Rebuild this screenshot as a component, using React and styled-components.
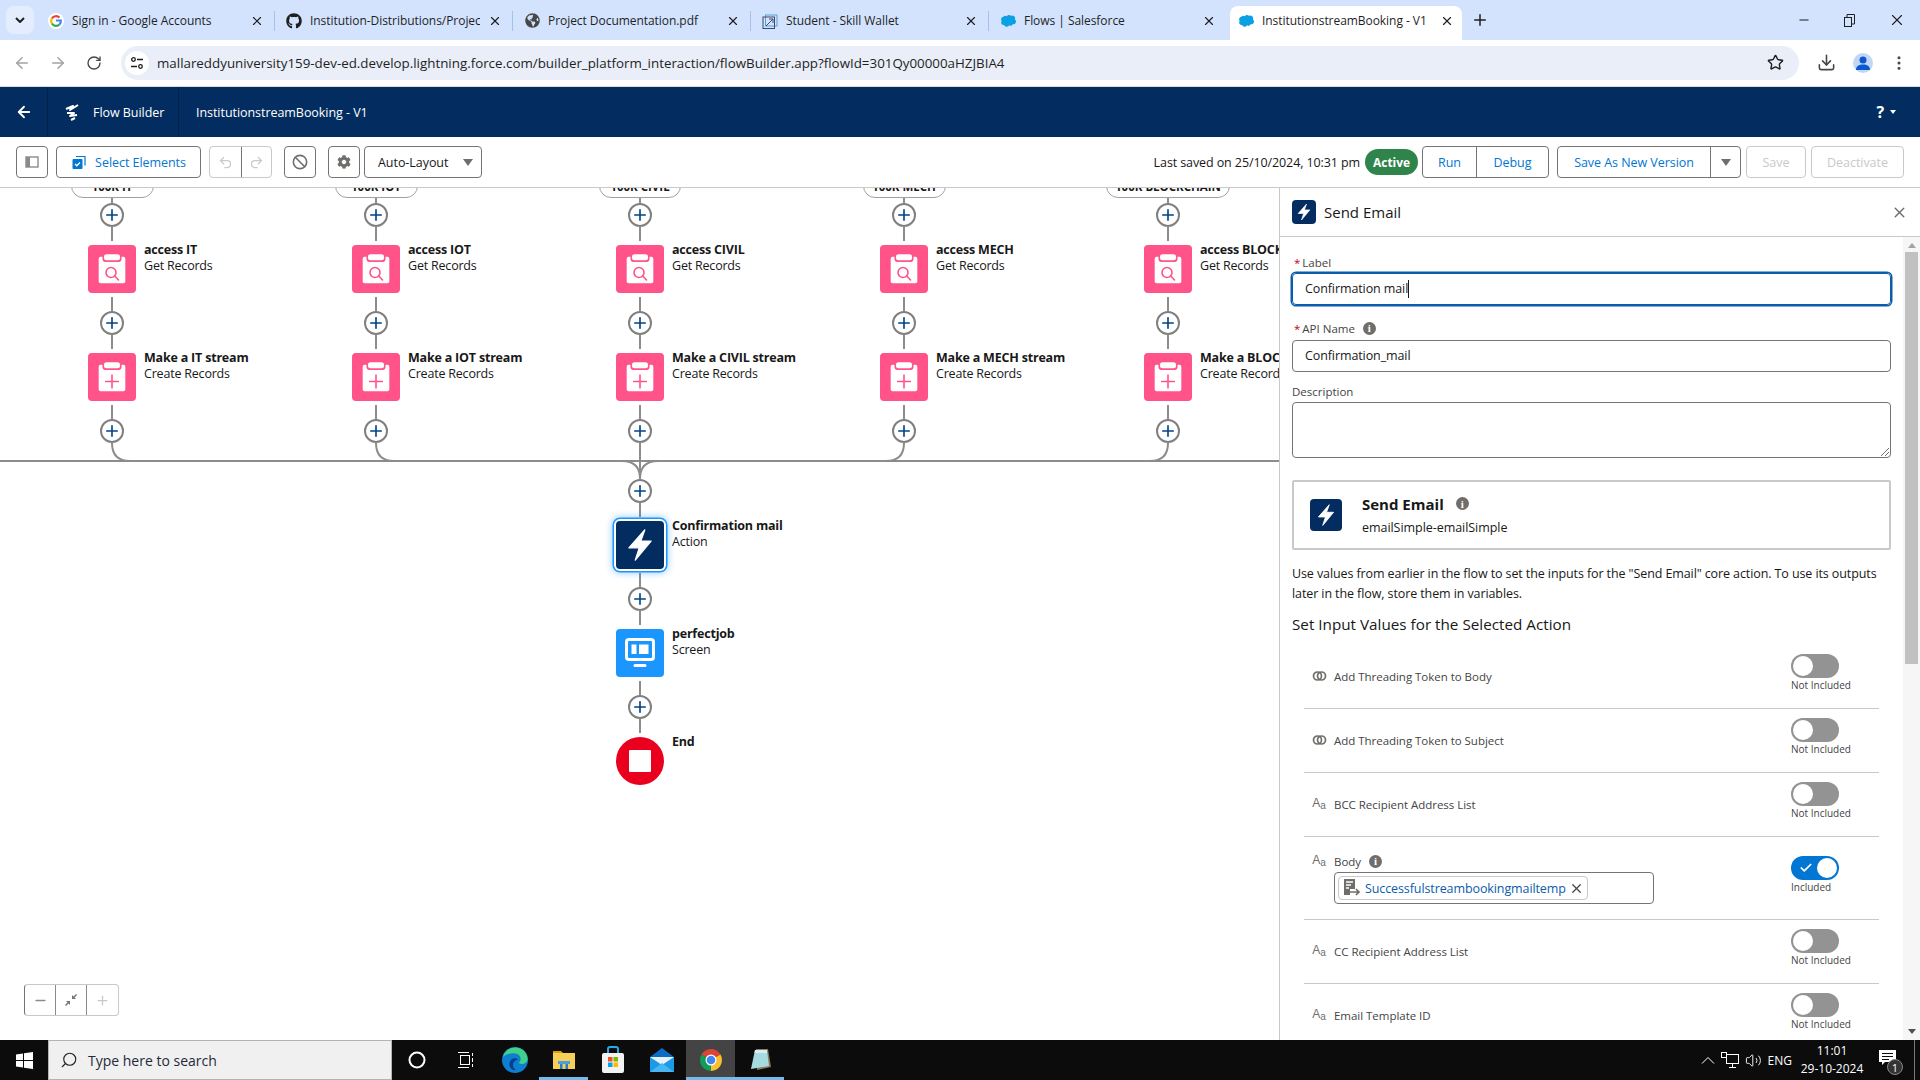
import React from 'react';
import styled, { createGlobalStyle } from 'styled-components';
import { ArrowLeft, ArrowRight, RotateCw, Star, Download, MoreVertical, X, Plus, Minus, Ban, Undo2, Redo2, Search, Check, Volume2 } from 'lucide-react';
import { FaGithub, FaCog, FaGlobeAmericas } from 'react-icons/fa';

const GlobalStyle = createGlobalStyle`
  html, body {
    margin: 0;
    width: 1920px;
    height: 1080px;
    overflow: hidden;
    background: white;
    font-family: "Open Sans", "Liberation Sans", sans-serif;
    color: #181818;
  }
  * { box-sizing: border-box; }
`;

//-----------Browser chrome-----------//

const Page = styled.div`
  display: flex;
  flex-direction: column;
  width: 1920px;
  height: 1080px;
`;
const TabStrip = styled.div`
  display: flex;
  align-items: flex-end;
  height: 40px;
  padding-left: 6px;
  background: #d3e3fd;
  flex-shrink: 0;
`;
const TabListButton = styled.div`
  display: flex;
  align-items: center;
  justify-content: center;
  width: 28px;
  height: 28px;
  margin: 0 6px 6px 0;
  border-radius: 8px;
  background: #e3edfe;
`;
const Tab = styled.div`
  position: relative;
  display: flex;
  align-items: center;
  width: 232px;
  height: 34px;
  margin-right: 6px;
  padding: 0 8px 5px;
  font-size: 12px;
  letter-spacing: -0.05px;
  color: #1f1f1f;
  border-radius: 8px 8px 0 0;
  background: ${(p) => (p.$active ? 'white' : 'transparent')};
  &::after {
    content: '';
    position: absolute;
    right: -3px;
    top: 5px;
    width: 1px;
    height: 20px;
    background: ${(p) => (p.$sep ? '#a8c0e8' : 'transparent')};
  }
`;
const TabIcon = styled.div`
  display: flex;
  align-items: center;
  justify-content: center;
  width: 16px;
  height: 16px;
  margin-right: 8px;
  flex-shrink: 0;
`;
const TabTitle = styled.div`
  flex: 1;
  min-width: 0;
  margin-right: 8px;
  white-space: nowrap;
  overflow: hidden;
`;
const NewTab = styled.div`
  display: flex;
  margin: 0 0 11px 3px;
`;
const WindowControls = styled.div`
  display: flex;
  align-items: center;
  margin: 0 14px 11px auto;
  gap: 33px;
`;
const NavBar = styled.div`
  display: flex;
  align-items: center;
  height: 47px;
  padding: 0 0 1px 13px;
  background: white;
  border-bottom: 1px solid #dadce0;
  flex-shrink: 0;
`;
const NavIcon = styled.div`
  display: flex;
  align-items: center;
  justify-content: center;
  width: 18px;
  margin-right: 18px;
  color: ${(p) => p.$color || '#474747'};
`;
const AddressBar = styled.div`
  display: flex;
  align-items: center;
  width: 1678px;
  height: 34px;
  padding: 0 15px 0 4px;
  border-radius: 17px;
  background: #e9eef8;
  font-size: 13.35px;
  color: #1f1f1f;
`;
const SiteInfo = styled.div`
  display: flex;
  align-items: center;
  justify-content: center;
  width: 24px;
  height: 24px;
  margin-right: 8px;
  border-radius: 50%;
  background: white;
`;
const Url = styled.div`
  flex: 1;
  white-space: nowrap;
`;
const NavRight = styled.div`
  display: flex;
  align-items: center;
  margin-left: 18px;
  gap: 17px;
  color: #474747;
`;
const Avatar = styled.div`
  display: flex;
  align-items: center;
  justify-content: center;
  width: 20px;
  height: 20px;
  border-radius: 50%;
  background: #c2d7f5;
`;

//-----------Flow builder header and toolbar-----------//

const AppHeader = styled.div`
  display: flex;
  align-items: stretch;
  height: 50px;
  background: #032d60;
  color: white;
  font-size: 12.5px;
  letter-spacing: -0.05px;
  flex-shrink: 0;
`;
const HeaderCell = styled.div`
  display: flex;
  align-items: center;
  justify-content: ${(p) => (p.$center ? 'center' : 'flex-start')};
  width: ${(p) => p.$w};
  padding-left: ${(p) => p.$pad || '0'};
  gap: 11px;
  border-right: 1px solid #02224a;
`;
const FlowTitle = styled.div`
  display: flex;
  align-items: center;
  padding-left: 17px;
`;
const HelpMenu = styled.div`
  display: flex;
  align-items: center;
  margin: 0 24px 0 auto;
  gap: 6px;
  font-size: 16px;
  font-weight: 700;
`;
const HelpCaret = styled.span`
  width: 0;
  height: 0;
  border-left: 3px solid transparent;
  border-right: 3px solid transparent;
  border-top: 4px solid white;
`;
const Toolbar = styled.div`
  display: flex;
  align-items: center;
  height: 51px;
  padding: 0 16px;
  background: white;
  border-bottom: 1px solid #c9c9c9;
  font-size: 12.5px;
  letter-spacing: -0.05px;
  flex-shrink: 0;
`;
const Button = styled.div`
  display: flex;
  align-items: center;
  justify-content: center;
  width: ${(p) => p.$w};
  height: 32px;
  margin-left: ${(p) => p.$ml || '0'};
  gap: 8px;
  border: 1px solid ${(p) => (p.$off ? '#c9c9c9' : '#747474')};
  border-radius: 4px;
  color: ${(p) => (p.$off ? '#c9c9c9' : '#0176d3')};
  background: white;
`;
const ButtonGroup = styled.div`
  display: flex;
  margin-left: ${(p) => p.$ml || '0'};
  height: 32px;
  border: 1px solid ${(p) => (p.$off ? '#c9c9c9' : '#747474')};
  border-radius: 4px;
`;
const Segment = styled.div`
  display: flex;
  align-items: center;
  justify-content: center;
  width: ${(p) => p.$w};
  color: ${(p) => (p.$off ? '#c9c9c9' : '#0176d3')};
  & + & {
    border-left: 1px solid ${(p) => (p.$off ? '#c9c9c9' : '#747474')};
  }
`;
const Caret = styled.span`
  width: 0;
  height: 0;
  border-left: 5px solid transparent;
  border-right: 5px solid transparent;
  border-top: 7px solid #706e6b;
`;
const LayoutSelect = styled(Button)`
  justify-content: space-between;
  padding: 0 8px 0 13px;
  color: #181818;
`;
const SavedText = styled.div`
  margin-left: auto;
  letter-spacing: -0.1px;
  white-space: nowrap;
`;
const ActiveBadge = styled.div`
  display: flex;
  align-items: center;
  justify-content: center;
  width: 53px;
  height: 26px;
  margin-left: 5px;
  border-radius: 13px;
  background: #2e844a;
  color: white;
  font-size: 12px;
  font-weight: 700;
`;

//-----------Canvas-----------//

const Workspace = styled.div`
  display: flex;
  flex: 1;
  min-height: 0;
`;
const Canvas = styled.div`
  position: relative;
  width: 1279px;
  flex-shrink: 0;
  overflow: hidden;
  background: white;
`;
const Merge = styled.svg`
  position: absolute;
  left: 0;
  top: 0;
`;
const BranchRow = styled.div`
  position: relative;
  display: flex;
  margin-top: -14px;
  padding-left: 88px;
`;
const Branch = styled.div`
  display: flex;
  flex-direction: column;
  align-items: flex-start;
  width: 264px;
  flex-shrink: 0;
`;
const MainChain = styled(Branch)`
  position: relative;
  margin: 36px 0 0 616px;
`;
const PillSlot = styled.div`
  display: flex;
  justify-content: center;
  width: 48px;
`;
const Pill = styled.div`
  flex-shrink: 0;
  width: ${(p) => p.$w};
  height: 24px;
  border: 1px solid #a0a0a0;
  border-radius: 12px;
  background: white;
  font-size: 11.5px;
  font-weight: 700;
  line-height: 24px;
  text-align: center;
  color: #181818;
  white-space: nowrap;
`;
const Stem = styled.div`
  width: 2px;
  height: ${(p) => p.$h || '14px'};
  margin: ${(p) => (p.$after ? '4px' : '0')} 0 ${(p) => (p.$before ? '4px' : '0')} 23px;
  background: #8c8c8c;
`;
const AddButton = styled.div`
  display: flex;
  align-items: center;
  justify-content: center;
  width: 24px;
  height: 24px;
  margin-left: 12px;
  border: 2px solid #808080;
  border-radius: 50%;
  background: white;
  color: #014486;
`;
const Node = styled.div`
  display: flex;
  gap: 8px;
  white-space: nowrap;
`;
const NodeIcon = styled.div`
  display: flex;
  align-items: center;
  justify-content: center;
  width: 48px;
  height: 48px;
  flex-shrink: 0;
  border-radius: ${(p) => p.$radius || '4px'};
  background: ${(p) => p.$bg};
  box-shadow: ${(p) => (p.$selected ? '0 0 0 2px white, 0 0 0 3.5px #1b96ff, 0 0 7px 4px rgba(27,150,255,.45)' : 'none')};
`;
const NodeText = styled.div`
  margin-top: -3px;
  font-size: 12.5px;
  letter-spacing: -0.2px;
  line-height: 16px;
`;
const NodeTitle = styled.div`
  font-weight: 700;
`;
const ZoomControls = styled.div`
  position: absolute;
  left: 24px;
  bottom: 24px;
  display: flex;
  height: 32px;
  border: 1px solid #c9c9c9;
  border-left-color: #747474;
  border-radius: 4px;
  background: white;
`;
const ZoomButton = styled.div`
  display: flex;
  align-items: center;
  justify-content: center;
  width: 31px;
  color: ${(p) => (p.$off ? '#c9c9c9' : '#8a8a8a')};
  border-right: ${(p) => (p.$last ? 'none' : '1px solid #8a8a8a')};
`;

//-----------Side panel-----------//

const Panel = styled.div`
  display: flex;
  flex-direction: column;
  width: 641px;
  border-left: 1px solid #c9c9c9;
  background: white;
`;
const PanelHeader = styled.div`
  display: flex;
  align-items: center;
  height: 49px;
  padding: 0 12px;
  border-bottom: 1px solid #c9c9c9;
  font-size: 15px;
  flex-shrink: 0;
`;
const BoltTile = styled.div`
  display: flex;
  align-items: center;
  justify-content: center;
  width: ${(p) => p.$size};
  height: ${(p) => p.$size};
  flex-shrink: 0;
  border-radius: 4px;
  background: #032d60;
`;
const PanelTitle = styled.div`
  flex: 1;
  margin-left: 8px;
`;
const PanelBody = styled.div`
  display: flex;
  flex: 1;
  min-height: 0;
`;
const Form = styled.div`
  flex: 1;
  min-width: 0;
  padding: 18px 12px 0;
  overflow: hidden;
`;
const FieldLabel = styled.div`
  display: flex;
  align-items: center;
  height: 16px;
  margin: ${(p) => p.$mt || '0'} 0 ${(p) => p.$mb || '2px'};
  padding-bottom: 2px;
  font-size: 11.5px;
  color: #444;
`;
const Required = styled.span`
  margin: 0 2px 0 2px;
  color: #ba0517;
`;
const InfoDot = styled.span`
  display: inline-flex;
  align-items: center;
  justify-content: center;
  width: 13px;
  height: 13px;
  margin-left: ${(p) => p.$ml || '8px'};
  border-radius: 50%;
  background: #706e6b;
  color: white;
  font-family: "Liberation Serif", serif;
  font-size: 11px;
  font-weight: 700;
`;
const TextField = styled.div`
  display: flex;
  align-items: center;
  height: 32px;
  padding: 0 0 1px 12px;
  border: 1px solid ${(p) => (p.$focus ? '#0b5cab' : '#747474')};
  border-radius: 4px;
  font-size: 12.5px;
  letter-spacing: -0.1px;
  box-shadow: ${(p) => (p.$focus ? '0 0 0 1.5px #0b5cab' : 'none')};
`;
const Cursor = styled.span`
  width: 1px;
  height: 18px;
  background: #181818;
`;
const TextArea = styled.div`
  position: relative;
  height: 56px;
  border: 1px solid #747474;
  border-radius: 4px;
`;
const ResizeGrip = styled.svg`
  position: absolute;
  right: 0;
  bottom: 0;
`;
const ActionCard = styled.div`
  display: flex;
  align-items: center;
  height: 70px;
  margin-top: 22px;
  padding-left: 16px;
  border: 2px solid #c9c9c9;
  border-radius: 2px;
  gap: 20px;
`;
const CardTitle = styled.div`
  display: flex;
  align-items: center;
  font-size: 15px;
  font-weight: 700;
  line-height: 20px;
`;
const CardSub = styled.div`
  margin-top: 5px;
  font-size: 12.5px;
  letter-spacing: -0.05px;
  line-height: 18px;
`;
const Help = styled.p`
  margin: 14px 0 0;
  font-size: 12.5px;
  letter-spacing: -0.1px;
  line-height: 20px;
`;
const SectionTitle = styled.div`
  margin-top: 8px;
  font-size: 15.25px;
  line-height: 24px;
`;
const Rows = styled.div`
  margin: 9px 12px 0;
`;
const Row = styled.div`
  display: flex;
  justify-content: space-between;
  height: ${(p) => (p.$open ? '83px' : '64px')};
  padding-top: ${(p) => (p.$open ? '19px' : '9px')};
  border-bottom: 1px solid #c9c9c9;
  flex-shrink: 0;
`;
const RowLabel = styled.div`
  display: flex;
  align-items: center;
  height: 16px;
  margin-top: ${(p) => (p.$open ? '-3px' : '14px')};
  font-size: 11.5px;
  letter-spacing: -0.03px;
  color: #444;
`;
const TypeIcon = styled.span`
  display: flex;
  align-items: flex-start;
  justify-content: center;
  width: 30px;
  color: #706e6b;
  font-family: "Liberation Sans", sans-serif;
  font-size: 12px;
  line-height: 13px;
`;
const SmallA = styled.span`
  margin-top: 4px;
  font-size: 10px;
  line-height: 10px;
`;
const RowMain = styled.div`
  display: flex;
  flex-direction: column;
`;
const Combo = styled.div`
  display: flex;
  align-items: center;
  width: 320px;
  height: 32px;
  margin: 3px 0 0 30px;
  padding-left: 3px;
  border: 1px solid #747474;
  border-radius: 4px;
`;
const Chip = styled.div`
  display: flex;
  align-items: center;
  height: 24px;
  width: 250px;
  padding: 0 5px 0 3px;
  border: 1px solid #c9c9c9;
  border-radius: 4px;
  color: #0b5cab;
  font-size: 12.5px;
  letter-spacing: -0.1px;
  white-space: nowrap;
  gap: 3px;
  svg {
    flex-shrink: 0;
  }
`;
const ChipClose = styled.span`
  display: flex;
  margin-left: auto;
  color: #444;
`;
const ToggleColumn = styled.div`
  width: 88px;
  flex-shrink: 0;
`;
const Switch = styled.div`
  position: relative;
  display: flex;
  align-items: center;
  width: 48px;
  height: 24px;
  padding-left: 8px;
  border-radius: 12px;
  background: ${(p) => (p.$on ? '#0176d3' : '#939393')};
  color: white;
`;
const Knob = styled.span`
  position: absolute;
  top: 2px;
  left: ${(p) => (p.$on ? '26px' : '2px')};
  width: 20px;
  height: 20px;
  border-radius: 50%;
  background: white;
`;
const SwitchText = styled.div`
  font-size: 10px;
  line-height: 14px;
  color: #444;
`;
const ScrollTrack = styled.div`
  display: flex;
  flex-direction: column;
  align-items: center;
  width: 17px;
  flex-shrink: 0;
  background: #f6f6f6;
`;
const ScrollArrow = styled.span`
  width: 0;
  height: 0;
  margin: ${(p) => (p.$up ? '6px 0 4px' : 'auto 0 6px')};
  border-left: 4px solid transparent;
  border-right: 4px solid transparent;
  border-bottom: ${(p) => (p.$up ? '5px solid #a3a3a3' : 'none')};
  border-top: ${(p) => (p.$up ? 'none' : '5px solid #505050')};
`;
const ScrollThumb = styled.div`
  width: 13px;
  height: 412px;
  background: #c1c1c1;
`;

//-----------Taskbar-----------//

const Taskbar = styled.div`
  display: flex;
  align-items: stretch;
  height: 40px;
  flex-shrink: 0;
  background: #0c0c0c;
  color: white;
`;
const StartButton = styled.div`
  display: flex;
  align-items: center;
  justify-content: center;
  width: 48px;
`;
const SearchBox = styled.div`
  display: flex;
  align-items: center;
  width: 344px;
  padding-left: 11px;
  gap: 10px;
  background: #f0f0f0;
  border: 1px solid #b4b4b4;
  color: #1f2b3a;
  font-size: 14px;
`;
const MirrorIcon = styled.span`
  display: flex;
  transform: scaleX(-1);
`;
const TaskItem = styled.div`
  display: flex;
  align-items: center;
  justify-content: center;
  width: 49px;
  background: ${(p) => (p.$active ? '#444' : 'transparent')};
  border-bottom: 3px solid ${(p) => (p.$open ? '#76b9ed' : 'transparent')};
  border-top: 3px solid transparent;
`;
const Tray = styled.div`
  display: flex;
  align-items: center;
  margin-left: auto;
  padding-right: 5px;
  gap: 6px;
  font-size: 12px;
`;
const Clock = styled.div`
  width: 72px;
  margin: 0 3px 0 -2px;
  text-align: center;
  line-height: 18px;
`;
const NotifyWrap = styled.div`
  position: relative;
  display: flex;
  width: 38px;
  height: 40px;
  align-items: flex-start;
  padding: 10px 0 0 2px;
  border-right: 1px solid #777;
`;
const NotifyBadge = styled.span`
  position: absolute;
  left: 10px;
  top: 19px;
  display: flex;
  align-items: center;
  justify-content: center;
  width: 16px;
  height: 16px;
  border: 1px solid #888;
  border-radius: 50%;
  background: #333;
  font-size: 11px;
`;

//-----------Icons-----------//

const Bolt = ({ size }) => (
  <svg width={size} height={size} viewBox="0 0 24 24">
    <path d="M15 2.500 5 13.800h6.500L9 21.600 19 9.500h-6.500z" fill="white" stroke="white" strokeWidth="0.8" strokeLinejoin="round" />
  </svg>
);
const ClipboardIcon = ({ kind }) => (
  <svg width="48" height="48" viewBox="0 0 48 48">
    <rect x="10.7" y="11.7" width="26.6" height="26.6" rx="2" fill="white" />
    <rect x="14.5" y="8" width="19" height="9" rx="3" fill="#ff538a" />
    <rect x="16" y="9.3" width="16" height="6" rx="2.5" fill="white" />
    {kind === 'get' ? (
      <g fill="none" stroke="#ff538a" strokeWidth="1.6">
        <circle cx="23" cy="27.5" r="5" />
        <path d="M26.8 31 30.5 35" strokeLinecap="round" />
      </g>
    ) : (
      <path d="M24 21.5v14M17 28.5h14" stroke="#ff538a" strokeWidth="1.6" />
    )}
  </svg>
);
const ScreenIcon = () => (
  <svg width="48" height="48" viewBox="0 0 48 48">
    <rect x="10.5" y="10.5" width="27" height="20" rx="2.5" fill="none" stroke="white" strokeWidth="3" />
    <rect x="15.5" y="15.5" width="5" height="9.5" fill="white" />
    <rect x="23" y="15.5" width="9.5" height="9.5" fill="white" />
    <rect x="17.5" y="35" width="13" height="3" rx="1.5" fill="white" />
  </svg>
);
const Cloud = () => (
  <svg width="16" height="16" viewBox="0 0 16 16">
    <path d="M6.6 3.200a2.800 2.800 0 0 1 4.300-.5 3 3 0 0 1 4 3.900 2.600 2.600 0 0 1-2.200 4.600 2.500 2.500 0 0 1-3.600 1 2.800 2.800 0 0 1-5.100-.2A2.500 2.500 0 0 1 1.700 8a2.700 2.700 0 0 1 1.700-4.300 2.600 2.600 0 0 1 3.200-.5z" fill="#0b9fe3" />
  </svg>
);
const GoogleG = () => (
  <svg width="16" height="16" viewBox="0 0 16 16">
    <circle cx="8" cy="8" r="8" fill="white" />
    <g fill="none" strokeWidth="2.2">
      <path d="M3.900 5.500A4.800 4.800 0 0 1 11.400 4.600" stroke="#ea4335" />
      <path d="M3.900 5.500a4.800 4.800 0 0 0 0 5" stroke="#fbbc05" />
      <path d="M3.900 10.500a4.800 4.800 0 0 0 7.600.9" stroke="#34a853" />
      <path d="M11.500 11.400A4.800 4.800 0 0 0 12.800 7.500H8" stroke="#4285f4" />
    </g>
  </svg>
);
const WalletIcon = () => (
  <svg width="16" height="16" viewBox="0 0 16 16" fill="none">
    <rect x="3.500" y="2" width="11.500" height="11" stroke="#5a9fd8" />
    <rect x="1" y="4" width="11.500" height="11.500" stroke="#3c4a6b" />
    <path d="M4 13 11 6M7 6h4v4" stroke="#3c4a6b" />
  </svg>
);
const TuneIcon = () => (
  <svg width="14" height="14" viewBox="0 0 14 14" fill="none" stroke="#1f1f1f" strokeWidth="1.3">
    <circle cx="3.500" cy="3.500" r="1.800" />
    <path d="M7 3.500h6M1 10.500h6" />
    <circle cx="10.500" cy="10.500" r="1.800" />
  </svg>
);
const RestoreIcon = () => (
  <svg width="11" height="13" viewBox="0 0 11 13" fill="none" stroke="#1f1f1f">
    <rect x="0.500" y="3.500" width="7" height="9" />
    <path d="M3 3V0.500h7.500V10H8" />
  </svg>
);
const FlowLogo = () => (
  <svg width="18" height="20" viewBox="0 0 18 20" fill="none" stroke="white" strokeWidth="2" strokeLinejoin="round">
    <path d="M2 7 9 4 6 8 14 3" />
    <path d="M3 11 10 11 6 14 13 13" />
    <path d="M7 18 11 16" />
  </svg>
);
const PanelToggleIcon = () => (
  <svg width="14" height="14" viewBox="0 0 14 14">
    <rect x="1" y="2" width="12" height="10" fill="none" stroke="#8a8a8a" strokeWidth="1.4" />
    <rect x="1" y="2" width="4" height="10" fill="#8a8a8a" />
  </svg>
);
const SelectIcon = () => (
  <svg width="16" height="16" viewBox="0 0 16 16">
    <path d="M5 2.500h9v9" fill="none" stroke="#0176d3" strokeWidth="1.200" />
    <rect x="1.500" y="5" width="10" height="10" rx="1" fill="#0176d3" />
    <path d="M4 10l1.800 1.800L9 8.500" fill="none" stroke="white" strokeWidth="1.300" />
  </svg>
);
const ShrinkIcon = () => (
  <svg width="14" height="14" viewBox="0 0 14 14" fill="#747474">
    <path d="M8 6V2l1.500 1.500L12 1l1 1-2.500 2.500L12 6zM6 8v4l-1.500-1.500L2 13l-1-1 2.500-2.500L2 8z" />
  </svg>
);
const BooleanIcon = () => (
  <svg width="15" height="12" viewBox="0 0 15 12" fill="none" stroke="#706e6b" strokeWidth="1.700">
    <circle cx="5.500" cy="6" r="4" />
    <circle cx="9.500" cy="6" r="4" />
  </svg>
);
const TemplateIcon = () => (
  <svg width="20" height="20" viewBox="0 0 20 20">
    <path d="M2 1h11v10H8v6H2z" fill="#706e6b" />
    <path d="M4 4h7M4 7h5M4 10h3" stroke="white" strokeWidth="1.300" />
    <path d="M8 14h9m-3-3 3 3-3 3" fill="none" stroke="#706e6b" strokeWidth="1.700" />
  </svg>
);
const WindowsLogo = () => (
  <svg width="17" height="17" viewBox="0 0 17 17" fill="white">
    <path d="M0 2.500 7 1.500v6.500H0zM8 1.300 17 0v8H8zM0 9h7v6.500L0 14.500zM8 9h9v8l-9-1.300z" />
  </svg>
);
const TaskViewIcon = () => (
  <svg width="18" height="18" viewBox="0 0 18 18" fill="none" stroke="white">
    <rect x="3.500" y="4.500" width="9" height="9" />
    <path d="M1 1.500h11M1 16.500h11M15.500 2v3M15.500 7v4M15.500 13v3" />
  </svg>
);
const EdgeIcon = () => (
  <svg width="28" height="28" viewBox="0 0 28 28">
    <circle cx="14" cy="14" r="13" fill="#0c7fd0" />
    <path d="M2 11C4 3 12 0 18 2c6 2 9 7 8.500 12-1 4-6 5-9 3 3-2 3-7-1-9-5-2-11 0-14.500 3z" fill="#3fd08a" />
    <path d="M12 24c-4-2-5-8-1-11 2-1 5-1 6 1-3 0-5 2-5 5 0 2 1 4 3 5z" fill="#0a3d8f" />
  </svg>
);
const FolderIcon = () => (
  <svg width="24" height="24" viewBox="0 0 24 24">
    <path d="M1 3h8l2 2h-10z" fill="#e0a100" />
    <rect x="1" y="5" width="22" height="16" fill="#f5cf57" />
    <rect x="6" y="13" width="12" height="3" fill="#4aa0e6" />
    <path d="M8 16h2.500v5H8zM13.500 16H16v5h-2.500z" fill="#2b7cc9" />
  </svg>
);
const StoreIcon = () => (
  <svg width="24" height="28" viewBox="0 0 24 28">
    <path d="M7 8V3a2 2 0 0 1 2-2h6a2 2 0 0 1 2 2v5" fill="none" stroke="#2aa8e8" strokeWidth="2" />
    <rect x="1" y="7" width="22" height="20" rx="2" fill="#f2f2f2" />
    <rect x="7" y="11" width="4.500" height="4.500" fill="#f25022" />
    <rect x="12.500" y="11" width="4.500" height="4.500" fill="#7fba00" />
    <rect x="7" y="16.500" width="4.500" height="4.500" fill="#00a4ef" />
    <rect x="12.500" y="16.500" width="4.500" height="4.500" fill="#ffb900" />
  </svg>
);
const MailIcon = () => (
  <svg width="24" height="24" viewBox="0 0 24 24">
    <path d="M0 9 12 0l12 9z" fill="#0a6cc4" />
    <rect x="0" y="9" width="24" height="15" fill="#1a9ae8" />
    <path d="M0 9h24l-12 8z" fill="#e8f2fb" />
    <path d="M0 24 12 15l12 9z" fill="#47b6f2" />
  </svg>
);
const ChromeIcon = () => (
  <svg width="24" height="24" viewBox="0 0 24 24">
    <path d="M12 12 2.500 6.500A11 11 0 0 1 21.500 6.500z" fill="#db4437" />
    <path d="M12 12 21.500 6.500A11 11 0 0 1 12 23z" fill="#fbc02d" />
    <path d="M12 12 12 23A11 11 0 0 1 2.500 6.500z" fill="#0f9d58" />
    <circle cx="12" cy="12" r="5.500" fill="white" />
    <circle cx="12" cy="12" r="4.300" fill="#4285f4" />
  </svg>
);
const NotepadIcon = () => (
  <svg width="24" height="24" viewBox="0 0 24 24">
    <path d="M8 1h12l3 18-14 3z" fill="#8a7a5c" />
    <path d="M7 2h12l2 16-18 3z" fill="#a7dbe0" />
    <path d="M7 2h12v3H6.500z" fill="#d8eef0" />
  </svg>
);
const NetworkIcon = () => (
  <svg width="18" height="16" viewBox="0 0 18 16" fill="none" stroke="white">
    <rect x="5.500" y="2.500" width="12" height="9" />
    <rect x="0.500" y="0.500" width="5" height="5" fill="#0c0c0c" />
    <path d="M11.500 12v3M8 15.500h7" />
  </svg>
);
const NotifyIcon = () => (
  <svg width="17" height="16" viewBox="0 0 17 16">
    <path d="M0 0h17v12H6l-3 3v-3H0z" fill="white" />
    <path d="M3 3.500h11M3 6.500h11M3 9.500h7" stroke="#0c0c0c" />
  </svg>
);

//--------------------------------------------//

const tabs = [
  { title: 'Sign in - Google Accounts', icon: <GoogleG />, sep: true },
  { title: 'Institution-Distributions/Project', icon: <FaGithub size={16} color="#1f1f1f" />, sep: true },
  { title: 'Project Documentation.pdf', icon: <FaGlobeAmericas size={15} color="#474747" />, sep: true },
  { title: 'Student - Skill Wallet', icon: <WalletIcon />, sep: true },
  { title: 'Flows | Salesforce', icon: <Cloud /> },
  { title: 'InstitutionstreamBooking - V1', icon: <Cloud />, active: true },
];

const branches = [
  { pill: '100K IT', name: 'IT', w: '83px' },
  { pill: '100K IOT', name: 'IOT', w: '83px' },
  { pill: '100K CIVIL', name: 'CIVIL', w: '82px' },
  { pill: '100K MECH', name: 'MECH', w: '83px' },
  { pill: '100K BLOCKCHAIN', name: 'BLOCKCHAIN', w: '124px' },
];

const inputs = [
  { label: 'BCC Recipient Address List' },
  { label: 'Body', included: true },
  { label: 'CC Recipient Address List' },
  { label: 'Email Template ID' },
];

function AddStep() {
  return (
    <AddButton>
      <Plus size={18} strokeWidth={2.2} />
    </AddButton>
  );
}

function FlowNode({ title, kind, children }) {
  return (
    <Node>
      {children}
      <NodeText>
        <NodeTitle>{title}</NodeTitle>
        {kind && <div>{kind}</div>}
      </NodeText>
    </Node>
  );
}

function Toggle({ on }) {
  return (
    <ToggleColumn>
      <Switch $on={on}>
        {on && <Check size={14} strokeWidth={3} />}
        <Knob $on={on} />
      </Switch>
      <SwitchText>{on ? 'Included' : 'Not Included'}</SwitchText>
    </ToggleColumn>
  );
}

function TextType() {
  return (
    <TypeIcon>
      A<SmallA>a</SmallA>
    </TypeIcon>
  );
}

const App = () => {
  return (
    <Page>
      <GlobalStyle />
      <TabStrip>
        <TabListButton>
          <svg width="10" height="6" viewBox="0 0 10 6" fill="none" stroke="#1f1f1f" strokeWidth="2"><path d="M1 1l4 4 4-4" /></svg>
        </TabListButton>
        {tabs.map((tab) => (
          <Tab key={tab.title} $active={tab.active} $sep={tab.sep}>
            <TabIcon>{tab.icon}</TabIcon>
            <TabTitle>{tab.title}</TabTitle>
            <X size={14} strokeWidth={2} />
          </Tab>
        ))}
        <NewTab><Plus size={18} color="#1f1f1f" /></NewTab>
        <WindowControls>
          <Minus size={14} color="#1f1f1f" />
          <RestoreIcon />
          <X size={18} color="#1f1f1f" strokeWidth={1.5} />
        </WindowControls>
      </TabStrip>

      <NavBar>
        <NavIcon $color="#a3a3a3"><ArrowLeft size={18} /></NavIcon>
        <NavIcon $color="#a3a3a3"><ArrowRight size={18} /></NavIcon>
        <NavIcon><RotateCw size={16} /></NavIcon>
        <AddressBar>
          <SiteInfo><TuneIcon /></SiteInfo>
          <Url>mallareddyuniversity159-dev-ed.develop.lightning.force.com/builder_platform_interaction/flowBuilder.app?flowId=301Qy00000aHZJBIA4</Url>
          <Star size={17} color="#1f1f1f" />
        </AddressBar>
        <NavRight>
          <Download size={19} />
          <Avatar>
            <svg width="14" height="16" viewBox="0 0 14 16" fill="#0b57d0"><circle cx="7" cy="5" r="3.500" /><path d="M0 15c0-4 3-5.500 7-5.500s7 1.500 7 5.500z" /></svg>
          </Avatar>
          <MoreVertical size={18} />
        </NavRight>
      </NavBar>

      <AppHeader>
        <HeaderCell $w="48px" $center><ArrowLeft size={18} strokeWidth={2.4} /></HeaderCell>
        <HeaderCell $w="131px" $pad="16px"><FlowLogo />Flow Builder</HeaderCell>
        <FlowTitle>InstitutionstreamBooking - V1</FlowTitle>
        <HelpMenu>?<HelpCaret /></HelpMenu>
      </AppHeader>

      <Toolbar>
        <Button $w="32px"><PanelToggleIcon /></Button>
        <Button $w="145px" $ml="8px"><SelectIcon />Select Elements</Button>
        <ButtonGroup $ml="8px" $off>
          <Segment $w="31px" $off><Undo2 size={15} /></Segment>
          <Segment $w="30px" $off><Redo2 size={15} /></Segment>
        </ButtonGroup>
        <Button $w="32px" $ml="12px"><Ban size={16} color="#706e6b" strokeWidth={2.4} /></Button>
        <Button $w="32px" $ml="12px"><FaCog size={14} color="#706e6b" /></Button>
        <LayoutSelect $w="118px" $ml="4px">Auto-Layout<Caret /></LayoutSelect>
        <SavedText>Last saved on 25/10/2024, 10:31 pm</SavedText>
        <ActiveBadge>Active</ActiveBadge>
        <ButtonGroup $ml="4px">
          <Segment $w="53px">Run</Segment>
          <Segment $w="72px">Debug</Segment>
        </ButtonGroup>
        <ButtonGroup $ml="8px">
          <Segment $w="152px">Save As New Version</Segment>
          <Segment $w="30px"><Caret /></Segment>
        </ButtonGroup>
        <Button $w="60px" $ml="5px" $off>Save</Button>
        <Button $w="93px" $ml="5px" $off>Deactivate</Button>
      </Toolbar>

      <Workspace>
        <Canvas>
          <Merge width="1279" height="300" fill="none" stroke="#8c8c8c" strokeWidth="2">
            <path d="M0 273H1279" />
            <path d="M112 255Q112 273 130 273M376 255Q376 273 394 273M904 255Q904 273 886 273M1168 255Q1168 273 1150 273" />
            <path d="M640 255V291M622 273Q640 273 640 291M658 273Q640 273 640 291" />
          </Merge>
          <BranchRow>
            {branches.map((branch) => (
              <Branch key={branch.name}>
                <PillSlot><Pill $w={branch.w}>{branch.pill}</Pill></PillSlot>
                <Stem $h="5px" />
                <AddStep />
                <Stem $before />
                <FlowNode title={`access ${branch.name}`} kind="Get Records">
                  <NodeIcon $bg="#ff538a"><ClipboardIcon kind="get" /></NodeIcon>
                </FlowNode>
                <Stem $after />
                <AddStep />
                <Stem $before />
                <FlowNode title={`Make a ${branch.name} stream`} kind="Create Records">
                  <NodeIcon $bg="#ff538a"><ClipboardIcon kind="create" /></NodeIcon>
                </FlowNode>
                <Stem $after />
                <AddStep />
              </Branch>
            ))}
          </BranchRow>
          <MainChain>
            <AddStep />
            <Stem $before />
            <FlowNode title="Confirmation mail" kind="Action">
              <NodeIcon $bg="#032d60" $selected><Bolt size={38} /></NodeIcon>
            </FlowNode>
            <Stem $after />
            <AddStep />
            <Stem $before />
            <FlowNode title="perfectjob" kind="Screen">
              <NodeIcon $bg="#1b96ff"><ScreenIcon /></NodeIcon>
            </FlowNode>
            <Stem $after />
            <AddStep />
            <Stem $before />
            <FlowNode title="End">
              <NodeIcon $bg="#ea001e" $radius="50%">
                <svg width="22" height="22" viewBox="0 0 22 22"><rect width="22" height="22" rx="1" fill="white" /></svg>
              </NodeIcon>
            </FlowNode>
          </MainChain>
          <ZoomControls>
            <ZoomButton><Minus size={15} strokeWidth={2.5} /></ZoomButton>
            <ZoomButton><ShrinkIcon /></ZoomButton>
            <ZoomButton $off $last><Plus size={15} strokeWidth={2} /></ZoomButton>
          </ZoomControls>
        </Canvas>

        <Panel>
          <PanelHeader>
            <BoltTile $size="24px"><Bolt size={20} /></BoltTile>
            <PanelTitle>Send Email</PanelTitle>
            <X size={17} color="#706e6b" />
          </PanelHeader>
          <PanelBody>
            <Form>
              <FieldLabel><Required>*</Required>Label</FieldLabel>
              <TextField $focus>Confirmation mail<Cursor /></TextField>
              <FieldLabel $mt="16px" $mb="3px"><Required>*</Required>API Name<InfoDot>i</InfoDot></FieldLabel>
              <TextField>Confirmation_mail</TextField>
              <FieldLabel $mt="12px">Description</FieldLabel>
              <TextArea>
                <ResizeGrip width="10" height="10" viewBox="0 0 10 10" stroke="#706e6b">
                  <path d="M1 9 9 1M5 9 9 5" />
                </ResizeGrip>
              </TextArea>
              <ActionCard>
                <BoltTile $size="32px"><Bolt size={26} /></BoltTile>
                <div>
                  <CardTitle>Send Email<InfoDot $ml="12px">i</InfoDot></CardTitle>
                  <CardSub>emailSimple-emailSimple</CardSub>
                </div>
              </ActionCard>
              <Help>Use values from earlier in the flow to set the inputs for the "Send Email" core action. To use its outputs later in the flow, store them in variables.</Help>
              <SectionTitle>Set Input Values for the Selected Action</SectionTitle>
              <Rows>
                <Row>
                  <RowLabel><TypeIcon><BooleanIcon /></TypeIcon>Add Threading Token to Body</RowLabel>
                  <Toggle />
                </Row>
                <Row>
                  <RowLabel><TypeIcon><BooleanIcon /></TypeIcon>Add Threading Token to Subject</RowLabel>
                  <Toggle />
                </Row>
                {inputs.map((input) => (
                  <Row key={input.label} $open={input.included}>
                    <RowMain>
                      <RowLabel $open={input.included}>
                        <TextType />{input.label}
                        {input.included && <InfoDot>i</InfoDot>}
                      </RowLabel>
                      {input.included && (
                        <Combo>
                          <Chip>
                            <TemplateIcon />
                            Successfulstreambookingmailtemp
                            <ChipClose><X size={15} /></ChipClose>
                          </Chip>
                        </Combo>
                      )}
                    </RowMain>
                    <Toggle on={input.included} />
                  </Row>
                ))}
              </Rows>
            </Form>
            <ScrollTrack>
              <ScrollArrow $up />
              <ScrollThumb />
              <ScrollArrow />
            </ScrollTrack>
          </PanelBody>
        </Panel>
      </Workspace>

      <Taskbar>
        <StartButton><WindowsLogo /></StartButton>
        <SearchBox>
          <MirrorIcon><Search size={18} color="#222" strokeWidth={1.5} /></MirrorIcon>
          Type here to search
        </SearchBox>
        <TaskItem>
          <svg width="18" height="18" viewBox="0 0 18 18" fill="none" stroke="white" strokeWidth="2"><circle cx="9" cy="9" r="7.500" /></svg>
        </TaskItem>
        <TaskItem><TaskViewIcon /></TaskItem>
        <TaskItem><EdgeIcon /></TaskItem>
        <TaskItem $open><FolderIcon /></TaskItem>
        <TaskItem><StoreIcon /></TaskItem>
        <TaskItem><MailIcon /></TaskItem>
        <TaskItem $active $open><ChromeIcon /></TaskItem>
        <TaskItem $open><NotepadIcon /></TaskItem>
        <Tray>
          <svg width="14" height="8" viewBox="0 0 14 8" fill="none" stroke="white"><path d="M1 7.500 7 1.500l6 6" /></svg>
          <NetworkIcon />
          <Volume2 size={17} strokeWidth={1.3} />
          <span>ENG</span>
          <Clock>11:01<br />29-10-2024</Clock>
          <NotifyWrap>
            <NotifyIcon />
            <NotifyBadge>1</NotifyBadge>
          </NotifyWrap>
        </Tray>
      </Taskbar>
    </Page>
  );
};

export default App;
